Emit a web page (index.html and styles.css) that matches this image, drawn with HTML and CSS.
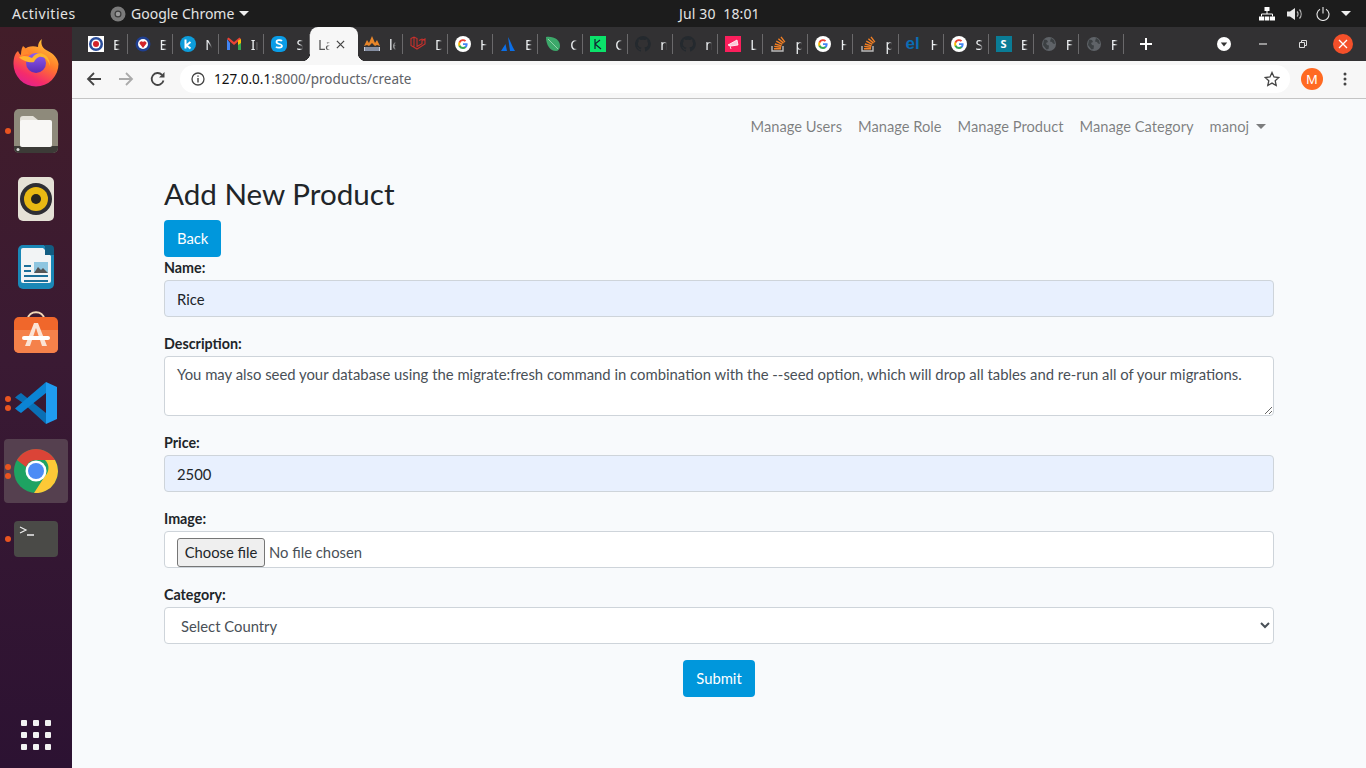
FILE: index.html
```html
<!DOCTYPE html>
<html lang="en">
<head>
<meta charset="utf-8">
<title>Laravel</title>
<link rel="stylesheet" href="styles.css">
</head>
<body>
<svg class="defs" width="0" height="0" aria-hidden="true">
  <symbol id="g" viewBox="0 0 16 16">
    <circle cx="8" cy="8" r="8" fill="#fff"/>
    <path d="M12.600 8.200c0-.4 0-.7-.1-1H8v1.900h2.600a2.300 2.300 0 0 1-1 1.500v1.200h1.600c.9-.9 1.400-2.100 1.400-3.600z" fill="#4285f4"/>
    <path d="M8 13c1.300 0 2.400-.4 3.200-1.200l-1.600-1.200c-.4.300-1 .5-1.600.5-1.300 0-2.300-.8-2.700-2H3.700v1.300A5 5 0 0 0 8 13z" fill="#34a853"/>
    <path d="M5.300 9.100a3 3 0 0 1 0-2V5.700H3.700a5 5 0 0 0 0 4.700z" fill="#fbbc05"/>
    <path d="M8 5.100c.7 0 1.300.2 1.800.7l1.400-1.400A5 5 0 0 0 3.700 5.700l1.600 1.300c.4-1.100 1.400-1.900 2.700-1.900z" fill="#ea4335"/>
  </symbol>
  <symbol id="gh" viewBox="0 0 16 16">
    <path fill="#24292e" d="M8 0a8 8 0 0 0-2.500 15.600c.4.100.5-.2.500-.4v-1.400c-2.200.5-2.700-1-2.700-1-.4-.9-.9-1.200-.9-1.200-.7-.5.100-.5.100-.5.800.1 1.200.8 1.200.8.700 1.200 1.900.9 2.300.7.100-.5.300-.9.500-1.100-1.800-.2-3.600-.9-3.600-4 0-.9.300-1.600.8-2.100-.1-.2-.4-1 .1-2.100 0 0 .7-.2 2.200.8a7.600 7.600 0 0 1 4 0c1.500-1 2.200-.8 2.200-.8.400 1.100.200 1.900.1 2.100.5.600.8 1.300.8 2.100 0 3.100-1.900 3.700-3.700 3.900.3.300.6.800.6 1.500v2.200c0 .2.100.5.600.4A8 8 0 0 0 8 0z"/>
  </symbol>
  <symbol id="so" viewBox="0 0 16 16">
    <path d="M2 10v5h11v-5" fill="none" stroke="#bcbbbb" stroke-width="1.400"/>
    <path d="M4 12.700h7M4.200 10.400l6.900.8M4.900 8l6.700 1.900M6.300 5.100l6 3.200M8.400 2.700l5.100 4.400M11 .8l3.900 5.300" fill="none" stroke="#f48024" stroke-width="1.400"/>
  </symbol>
  <symbol id="globe" viewBox="0 0 16 16">
    <circle cx="8" cy="8" r="7" fill="#5f6368"/>
    <path d="M3 3.500l3 .5 1 2-2 1 1 2 2 .5-.5 3.500-2 .5L2 9zM10 2l3 2 1 4-2-.5-1-1.500-2-.5z" fill="#3c4043"/>
  </symbol>
</svg>

<header class="topbar">
  <span class="activities">Activities</span>
  <span class="app">
    <svg class="app-icon" viewBox="0 0 16 16"><circle cx="8" cy="8" r="7.500" fill="#7b7b7b"/><circle cx="8" cy="8" r="3.500" fill="#3a3a3a"/><circle cx="8" cy="8" r="2.300" fill="#9b9b9b"/></svg>
    Google Chrome
    <i class="caret-w"></i>
  </span>
  <span class="clock">Jul 30&nbsp; 18:01</span>
  <span class="tray">
    <svg class="tray-net" viewBox="0 0 16 14"><path fill="#fff" d="M5.500 0h5v4h-5zM0 9.500h5v4H0zM5.700 9.500h4.600v4H5.700zM11 9.500h5v4h-5z"/><path d="M8 4v3M2.500 9.500V7h11v2.500" fill="none" stroke="#fff"/></svg>
    <svg class="tray-vol" viewBox="0 0 16 14"><path fill="#e8e8e8" d="M0 4.500h3L8 1v12L3 9.500H0z"/><path d="M10 4.500a3.500 3.500 0 0 1 0 5M12.500 2.500a7 7 0 0 1 0 9" fill="none" stroke="#bbb" stroke-width="1.200"/></svg>
    <svg class="tray-pow" viewBox="0 0 14 14"><path d="M4 2.300a6 6 0 1 0 6 0M7 0v6.500" fill="none" stroke="#e8e8e8" stroke-width="1.100"/></svg>
    <i class="caret-w"></i>
  </span>
</header>

<div class="desktop">
  <nav class="dock">
    <div class="dock-item">
      <svg class="ic-firefox" viewBox="0 0 46 48">
        <defs>
          <linearGradient id="ff1" x1="0.800" y1="0" x2="0.300" y2="1"><stop offset="0" stop-color="#ffd23a"/><stop offset=".45" stop-color="#ff7a2a"/><stop offset=".8" stop-color="#f52c6a"/><stop offset="1" stop-color="#e0218f"/></linearGradient>
          <linearGradient id="ff2" x1="0.500" y1="0" x2="0.500" y2="1"><stop offset="0" stop-color="#8f5df0"/><stop offset="1" stop-color="#5b2bb5"/></linearGradient>
        </defs>
        <path fill="url(#ff1)" d="M29 0C27 5 30 10 35 12C41 15 45 20 45.500 25A22.500 22.500 0 0 1 .5 25C.5 19 2 14 5 12C6 14 6.500 15 8 16C9 12 11 10 15 8C18 7 22 7 25 8C25 5 26 2 29 0z"/>
        <circle cx="23" cy="24" r="10" fill="url(#ff2)"/>
        <path fill="#ffb52e" d="M6 18C11 16 15 17 19 19C22 14 28 13 32 16C35 18 37 22 37 27C35 20 30 17 26 18C23 19 22 21 21 23C17 24 9 22 6 18z"/>
        <path fill="#ff8a2c" d="M10 7C13 9 15 12 16 15C13 15 10 16 8 18C8 14 8 10 10 7z"/>
      </svg>
    </div>
    <div class="dock-item">
      <i class="dot dot-one"></i>
      <svg class="ic-files" viewBox="0 0 44 44">
        <rect width="44" height="44" rx="5" fill="#8e8a7b"/>
        <path d="M0 37h44v2a5 5 0 0 1-5 5H5a5 5 0 0 1-5-5z" fill="#3c3b37"/>
        <path d="M6 10a3 3 0 0 1 3-3h10l5 4h10a3 3 0 0 1 3 3v19a2 2 0 0 1-2 2H8a2 2 0 0 1-2-2z" fill="#e4e1d9"/>
        <rect x="6" y="11" width="32" height="27" rx="2" fill="#f8f7f5"/>
        <circle cx="4" cy="40.500" r="1.500" fill="#ddd"/>
      </svg>
    </div>
    <div class="dock-item">
      <svg class="ic-rhythm" viewBox="0 0 36 44">
        <rect width="36" height="44" rx="5" fill="#e5e1d6"/>
        <circle cx="18" cy="22" r="16" fill="#2e2e33"/>
        <circle cx="18" cy="22" r="12" fill="#e9b913"/>
        <circle cx="18" cy="22" r="5" fill="#26241f"/>
      </svg>
    </div>
    <div class="dock-item">
      <svg class="ic-writer" viewBox="0 0 36 44">
        <path d="M6 0h20l10 10v29a5 5 0 0 1-5 5H5a5 5 0 0 1-5-5V5a5 5 0 0 1 5-5z" fill="#1a87b6"/>
        <path d="M5 3h20l8 8v25a2 2 0 0 1-2 2H5a2 2 0 0 1-2-2V5a2 2 0 0 1 2-2z" fill="#f2f4f5"/>
        <path d="M27 0h5a4 4 0 0 1 4 4v6h-9z" fill="#135d82"/>
        <path d="M6 20h7v2H6zM6 25h7v2H6zM6 30h24v2H6zM6 35h24v2H6z" fill="#1b6f99"/>
        <rect x="16" y="17" width="14" height="11" fill="#8fc6e0"/>
        <path d="M16 28l4-6 3 3 2-2 5 5z" fill="#555"/>
      </svg>
    </div>
    <div class="dock-item">
      <svg class="ic-store" viewBox="0 0 44 48">
        <path d="M14 8C14-1 30-1 30 8" fill="none" stroke="#f3d9b8" stroke-width="2"/>
        <rect y="6" width="44" height="36" rx="5" fill="#f0672b"/>
        <path d="M0 19h44v18a5 5 0 0 1-5 5H5a5 5 0 0 1-5-5z" fill="#f5814a"/>
        <path d="M20 12h4l9 23h-5L22 17l-6 18h-5z" fill="#fbe3d4"/>
        <rect x="8" y="25" width="28" height="4" rx="2" fill="#fff"/>
      </svg>
    </div>
    <div class="dock-item">
      <i class="dot dot-a"></i><i class="dot dot-b"></i>
      <svg class="ic-code" viewBox="0 0 42 42">
        <path d="M31 42V31L6 11 3 13 0 15.500 8 21z" fill="#0a6fb5"/>
        <path d="M31 0V11L6 31 3 29 0 26.500 31 0z" fill="#0b84d4"/>
        <path d="M31 0L42 5V37L31 42z" fill="#1f9cf0"/>
      </svg>
    </div>
    <div class="dock-item dock-active">
      <i class="dot dot-a"></i><i class="dot dot-b"></i>
      <svg class="ic-chrome" viewBox="0 0 44 44">
        <circle cx="22" cy="22" r="22" fill="#1ea362"/>
        <path d="M3 11A22 22 0 0 1 41 11H22a11 11 0 0 0-10 7z" fill="#db4437"/>
        <path d="M41 11A22 22 0 0 1 20 44l11-17a11 11 0 0 0 0-16z" fill="#fdc937"/>
        <circle cx="22" cy="22" r="10.500" fill="#fff"/>
        <circle cx="22" cy="22" r="8" fill="#4c8bf5"/>
      </svg>
    </div>
    <div class="dock-item">
      <i class="dot dot-one"></i>
      <svg class="ic-term" viewBox="0 0 44 36">
        <rect width="44" height="36" rx="4" fill="#4a4a47"/>
        <path d="M6 6l6 3-6 3" fill="none" stroke="#eee" stroke-width="1.200"/>
        <path d="M13 14h7" stroke="#eee" stroke-width="1.500"/>
      </svg>
    </div>
    <div class="apps-grid" aria-hidden="true">
      <i></i><i></i><i></i><i></i><i></i><i></i><i></i><i></i><i></i>
    </div>
  </nav>

  <div class="window">
    <div class="tabstrip">
      <div class="tab wide first"><svg class="fav" viewBox="0 0 16 16"><rect width="16" height="16" fill="#fff"/><circle cx="8" cy="8" r="7" fill="#2a4d9b"/><circle cx="8" cy="8" r="4.500" fill="#fff"/><circle cx="8" cy="8" r="3" fill="#d2232a"/></svg><span class="tab-t">E</span></div>
      <div class="tab wide"><svg class="fav" viewBox="0 0 16 16"><circle cx="8" cy="8" r="7.500" fill="#1f3f8f"/><circle cx="8" cy="8" r="5" fill="#fff"/><path d="M8 12L4.500 7.500a2 2 0 0 1 3.500-1.500 2 2 0 0 1 3.500 1.500z" fill="#d2232a"/></svg><span class="tab-t">E</span></div>
      <div class="tab wide"><svg class="fav" viewBox="0 0 16 16"><circle cx="8" cy="8" r="8" fill="#0d9ddb"/><path d="M5.500 3.500v9M10.500 6l-4 3.300 4 3.200" fill="none" stroke="#fff" stroke-width="2"/></svg><span class="tab-t">N</span></div>
      <div class="tab wide"><svg class="fav" viewBox="0 0 16 16"><path d="M1 3v11h3V7z" fill="#4285f4"/><path d="M15 3v11h-3V7z" fill="#34a853"/><path d="M1 3l7 6 7-6-1.500-1.500L8 6 2.500 1.500z" fill="#ea4335"/><path d="M12 4.500L15 3v4l-3 2z" fill="#fbbc05"/></svg><span class="tab-t">In</span></div>
      <div class="tab wide"><svg class="fav" viewBox="0 0 16 16"><rect width="16" height="16" rx="6" fill="#0a9ce6"/><path d="M11 5c-1-1.200-5.500-1.500-5.500 1 0 2.500 5.500 1.500 5.500 4 0 2.300-5 2-6 .7" fill="none" stroke="#fff" stroke-width="1.700"/></svg><span class="tab-t">S</span></div>
      <div class="tab tab-active"><span class="tab-t">La</span><svg class="tab-x" viewBox="0 0 10 10"><path d="M1 1l8 8M9 1l-8 8" stroke="#444" stroke-width="1.400"/></svg></div>
      <div class="tab after-active"><svg class="fav" viewBox="0 0 16 16"><path d="M0 10L3 4l2 3 3-7 3 7 2-3 3 6-3-1-2 1-3-3-3 3-2-1z" fill="#e8862a"/><rect y="11" width="16" height="4" fill="#c5cbd8"/><path d="M1 12h14M1 14h14" stroke="#44506b"/></svg><span class="tab-t">le</span></div>
      <div class="tab"><svg class="fav" viewBox="0 0 16 16"><path d="M1 2.500l3-1.500 3 1.500v8l5-2.800V4.500l3-1.500v5l-8 5-6-3.500zM9 4.500l3-1.500 3 1.500M4 1v9.500" fill="none" stroke="#c9302c" stroke-width="1.100"/></svg><span class="tab-t">D</span></div>
      <div class="tab"><svg class="fav"><use href="#g"/></svg><span class="tab-t">H</span></div>
      <div class="tab"><svg class="fav" viewBox="0 0 16 16"><path d="M8 1c2 3 4 9 7 14h-5zM5.500 8L1 15h6z" fill="#0b6fe8"/></svg><span class="tab-t">E</span></div>
      <div class="tab"><svg class="fav" viewBox="0 0 16 16"><path d="M1 1c8-1 14 3 14 9 0 3-2 5-4 5-6 0-10-6-10-14z" fill="#3ca86a"/><path d="M3 3l10 10" stroke="#a7dcb9" stroke-width=".8"/></svg><span class="tab-t">C</span></div>
      <div class="tab"><svg class="fav" viewBox="0 0 16 16"><rect width="16" height="16" fill="#0be26a"/><path d="M5 3v10M5 8l5-4M5 8l6 5" stroke="#123" stroke-width="1.200" fill="none"/></svg><span class="tab-t">C</span></div>
      <div class="tab"><svg class="fav"><use href="#gh"/></svg><span class="tab-t">n</span></div>
      <div class="tab"><svg class="fav"><use href="#gh"/></svg><span class="tab-t">n</span></div>
      <div class="tab"><svg class="fav" viewBox="0 0 16 16"><rect width="16" height="16" fill="#fb1f5c"/><path d="M3 9l9-5 1 5-7 1zM5 10l1 3" fill="#fbc7d5" stroke="#fff" stroke-width=".8"/></svg><span class="tab-t">L</span></div>
      <div class="tab"><svg class="fav"><use href="#so"/></svg><span class="tab-t">p</span></div>
      <div class="tab"><svg class="fav"><use href="#g"/></svg><span class="tab-t">H</span></div>
      <div class="tab"><svg class="fav"><use href="#so"/></svg><span class="tab-t">p</span></div>
      <div class="tab"><span class="fav fav-el">el</span><span class="tab-t">H</span></div>
      <div class="tab"><svg class="fav"><use href="#g"/></svg><span class="tab-t">S</span></div>
      <div class="tab"><span class="fav fav-s">S</span><span class="tab-t">E</span></div>
      <div class="tab"><svg class="fav"><use href="#globe"/></svg><span class="tab-t">F</span></div>
      <div class="tab"><svg class="fav"><use href="#globe"/></svg><span class="tab-t">F</span></div>
      <svg class="newtab" viewBox="0 0 12 12"><path d="M6 0v12M0 6h12" stroke="#fff" stroke-width="2"/></svg>
      <svg class="tabsearch" viewBox="0 0 14 14"><circle cx="7" cy="7" r="7" fill="#fff"/><path d="M3.800 5.500h6.400L7 9.500z" fill="#333"/></svg>
      <svg class="win-min" viewBox="0 0 8 2"><path d="M0 1h8" stroke="#ddd" stroke-width="1.200"/></svg>
      <svg class="win-max" viewBox="0 0 8 8"><path d="M.5 2.500h5v5h-5zM2.500 2V.5h5v5H6" fill="none" stroke="#ddd"/></svg>
      <svg class="win-close" viewBox="0 0 20 20"><circle cx="10" cy="10" r="10" fill="#f4502a"/><path d="M6 6l8 8M14 6l-8 8" stroke="#fff" stroke-width="1.300"/></svg>
    </div>

    <div class="toolbar">
      <svg class="tb-btn" viewBox="0 0 16 16"><path d="M15 8H2M8 2L2 8l6 6" fill="none" stroke="#444" stroke-width="1.800"/></svg>
      <svg class="tb-btn" viewBox="0 0 16 16"><path d="M1 8h13M8 2l6 6-6 6" fill="none" stroke="#aaa" stroke-width="1.800"/></svg>
      <svg class="tb-btn" viewBox="0 0 16 16"><path d="M13.500 9.500A6 6 0 1 1 12 3.800" fill="none" stroke="#444" stroke-width="1.800"/><path d="M14.500 1v5.500H9z" fill="#444"/></svg>
      <div class="omnibox">
        <svg class="info" viewBox="0 0 14 14"><circle cx="7" cy="7" r="6" fill="none" stroke="#444" stroke-width="1.300"/><path d="M7 6v4.500M7 3.500v1.300" stroke="#444" stroke-width="1.400"/></svg>
        <span class="url"><b>127.0.0.1</b>:8000/products/create</span>
        <svg class="star" viewBox="0 0 16 16"><path d="M8 1.500l2 4.500 4.800.5-3.600 3.200 1 4.800L8 12.100l-4.200 2.400 1-4.800L1.200 6.500 6 6z" fill="none" stroke="#444" stroke-width="1.300"/></svg>
      </div>
      <span class="avatar">M</span>
      <svg class="kebab" viewBox="0 0 4 14"><circle cx="2" cy="2" r="1.500" fill="#444"/><circle cx="2" cy="7" r="1.500" fill="#444"/><circle cx="2" cy="12" r="1.500" fill="#444"/></svg>
    </div>

    <main class="page">
      <div class="navbar">
        <a class="nav-link">Manage Users</a>
        <a class="nav-link">Manage Role</a>
        <a class="nav-link">Manage Product</a>
        <a class="nav-link">Manage Category</a>
        <a class="nav-link">manoj<i class="caret-nav"></i></a>
      </div>
      <div class="container">
        <h2 class="title">Add New Product</h2>
        <a class="btn">Back</a>
        <form class="form">
          <div class="group">
            <label class="label">Name:</label>
            <input class="control filled" type="text" value="Rice">
          </div>
          <div class="group">
            <label class="label">Description:</label>
            <textarea class="control area">You may also seed your database using the migrate:fresh command in combination with the --seed option, which will drop all tables and re-run all of your migrations.</textarea>
          </div>
          <div class="group">
            <label class="label">Price:</label>
            <input class="control filled" type="text" value="2500">
          </div>
          <div class="group">
            <label class="label">Image:</label>
            <div class="control file-box"><button class="file-btn" type="button">Choose file</button><span class="file-name">No file chosen</span></div>
          </div>
          <div class="group">
            <label class="label">Category:</label>
            <select class="control select"><option>Select Country</option></select>
          </div>
          <div class="actions"><a class="btn">Submit</a></div>
        </form>
      </div>
    </main>
  </div>
</div>
</body>
</html>
```

FILE: styles.css
```css
* { box-sizing: border-box; }
html, body { height: 100%; }
body {
  margin: 0;
  width: 1366px;
  height: 768px;
  overflow: hidden;
  display: flex;
  flex-direction: column;
  font-family: "Open Sans", "Noto Sans", sans-serif;
  background: #1c1c1c;
}
.defs { display: block; height: 0; }

/* GNOME top bar */
.topbar {
  height: 27px;
  flex: none;
  display: flex;
  align-items: center;
  padding-left: 12px;
  background: #1c1c1c;
  color: #e4e4e4;
  font-family: "Noto Sans", sans-serif;
  font-size: 14px;
}
.activities { width: 98px; letter-spacing: .55px; }
.app { display: flex; align-items: center; width: 569px; }
.app-icon { width: 16px; height: 16px; margin-right: 5px; }
.caret-w {
  display: inline-block;
  width: 0;
  height: 0;
  margin-left: 5px;
  border-left: 5px solid transparent;
  border-right: 5px solid transparent;
  border-top: 5px solid #eee;
}
.clock { width: 580px; letter-spacing: .15px; }
.tray { display: flex; align-items: center; }
.tray-net { width: 16px; height: 14px; margin-right: 12px; }
.tray-vol { width: 16px; height: 14px; margin-right: 13px; }
.tray-pow { width: 14px; height: 14px; margin-right: 6px; }

.desktop { flex: 1; display: flex; min-height: 0; }

/* Dock */
.dock {
  width: 72px;
  flex: none;
  display: flex;
  flex-direction: column;
  align-items: center;
  padding-top: 2px;
  background: linear-gradient(180deg, #421d29 0%, #3a1a33 45%, #2c1232 100%);
}
.dock-item {
  position: relative;
  width: 64px;
  height: 68px;
  flex: none;
  display: flex;
  align-items: center;
  justify-content: center;
}
.dock-active { height: 64px; margin: 2px 0; border-radius: 4px; background: #55404f; }
.dot {
  position: absolute;
  left: 1px;
  width: 6px;
  height: 6px;
  border-radius: 50%;
  background: #e95420;
}
.dot-one { top: 31px; }
.dot-a { top: 27px; }
.dot-b { top: 36px; }
.dock-active .dot-a { top: 25px; }
.dock-active .dot-b { top: 34px; }
.ic-firefox { width: 46px; height: 48px; }
.ic-files { width: 44px; height: 44px; }
.ic-rhythm { width: 36px; height: 44px; }
.ic-writer { width: 36px; height: 44px; }
.ic-store { width: 44px; height: 48px; }
.ic-code { width: 42px; height: 42px; }
.ic-chrome { width: 44px; height: 44px; }
.ic-term { width: 44px; height: 36px; }
.apps-grid {
  margin-top: auto;
  margin-bottom: 18px;
  display: grid;
  grid-template-columns: repeat(3, 6px);
  gap: 6px;
}
.apps-grid i { width: 6px; height: 6px; border-radius: 1px; background: #f2f2f2; }

/* Chrome window */
.window { flex: 1; display: flex; flex-direction: column; min-width: 0; }
.tabstrip {
  height: 34px;
  flex: none;
  display: flex;
  align-items: center;
  padding-left: 10px;
  background: #323133;
}
.tab {
  position: relative;
  width: 45.06px;
  height: 34px;
  flex: none;
  display: flex;
  align-items: center;
  padding-left: 7px;
  color: #eceff1;
  font-family: "Noto Sans", sans-serif;
  font-size: 14px;
}
.tab.wide { width: 45.6px; }
.tab.first { padding-left: 6px; }
.tab.after-active { padding-left: 6px; }
.tab::after {
  content: "";
  width: 1px;
  height: 20px;
  margin-left: auto;
  background: #6a696b;
}
.fav { width: 16px; height: 16px; flex: none; }
.fav-el {
  color: #0a6db4;
  font-family: "Liberation Sans", sans-serif;
  font-size: 17px;
  font-weight: 700;
  line-height: 16px;
}
.fav-s {
  background: #0a7c96;
  color: #fff;
  font-size: 11px;
  font-weight: 700;
  line-height: 16px;
  text-align: center;
}
.tab-t {
  width: 14px;
  margin-left: 2px;
  padding-left: 7px;
  overflow: hidden;
  white-space: nowrap;
  -webkit-mask-image: linear-gradient(90deg, #000 75%, transparent);
  mask-image: linear-gradient(90deg, #000 75%, transparent);
}
.tab-active {
  width: 48px;
  border-radius: 8px 8px 0 0;
  background: #f7f7f7;
  color: #555;
  padding-left: 8px;
}
.tab-active::before,
.tab-active::after {
  content: "";
  position: absolute;
  bottom: 0;
  width: 8px;
  height: 8px;
  margin: 0;
}
.tab-active::before {
  left: -8px;
  background: radial-gradient(circle at 0 0, transparent 8px, #f7f7f7 8.5px);
}
.tab-active::after {
  right: -8px;
  background: radial-gradient(circle at 100% 0, transparent 8px, #f7f7f7 8.5px);
}
.tab-active .tab-t { margin-left: 0; padding-left: 0; width: 12px; }
.tab-x { width: 9px; height: 9px; margin-left: 6px; }
.newtab { width: 12px; height: 12px; margin-left: 16px; }
.tabsearch { width: 14px; height: 14px; margin-left: 65px; }
.win-min { width: 8px; height: 2px; margin-left: 28px; }
.win-max { width: 8px; height: 8px; margin-left: 32px; }
.win-close { width: 20px; height: 20px; margin-left: 26px; }

.toolbar {
  height: 38px;
  flex: none;
  display: flex;
  align-items: flex-start;
  padding: 4px 0 0 14px;
  background: #f7f7f7;
  border-bottom: 1px solid #c4c4c4;
}
.tb-btn { width: 16px; height: 16px; margin: 6px 16px 0 0; flex: none; }
.omnibox {
  width: 1110px;
  height: 28px;
  margin-left: -2px;
  display: flex;
  align-items: center;
  padding-left: 11px;
  border-radius: 14px;
  background: #fff;
}
.info { width: 14px; height: 14px; flex: none; }
.url {
  margin-left: 9px;
  color: #5f6368;
  font-family: "Noto Sans", sans-serif;
  font-size: 13.5px;
}
.url b { color: #111; font-weight: 400; }
.star { width: 16px; height: 16px; margin-left: auto; margin-right: 10px; }
.avatar {
  width: 22px;
  height: 22px;
  margin: 3px 0 0 11px;
  flex: none;
  border-radius: 50%;
  background: #ff6a22;
  color: #fff;
  font-family: "Noto Sans", sans-serif;
  font-size: 13px;
  line-height: 22px;
  text-align: center;
}
.kebab { width: 4px; height: 14px; margin: 7px 0 0 20px; flex: none; }

/* Page */
.page {
  flex: 1;
  min-height: 0;
  background: #f8fafc;
  color: #212529;
  font-family: "Lato", sans-serif;
  font-size: 14.8px;
}
.navbar {
  display: flex;
  justify-content: flex-end;
  width: 1202px;
  height: 56px;
  padding-top: 16px;
  font-size: 14.7px;
}
.nav-link {
  padding: 0 8px;
  color: rgba(0, 0, 0, .5);
  line-height: 22px;
  white-space: nowrap;
}
.caret-nav {
  display: inline-block;
  margin-left: 7px;
  vertical-align: 3px;
  border-left: 5px solid transparent;
  border-right: 5px solid transparent;
  border-top: 5px solid rgba(0, 0, 0, .5);
}
.container { width: 1110px; margin-left: 92px; }
.title {
  margin: 0;
  height: 65px;
  padding-top: 19px;
  font-size: 29.6px;
  font-weight: 400;
  line-height: 40px;
  color: #212529;
}
.btn {
  display: inline-block;
  height: 37px;
  padding: 0 13px;
  border-radius: 4px;
  background: #0097dc;
  color: #fff;
  line-height: 37px;
}
.form { display: block; }
.group { margin-bottom: 16px; }
.label { display: block; height: 23px; font-weight: 700; font-size: 14.3px; line-height: 22px; }
.control {
  display: block;
  width: 100%;
  height: 37px;
  padding: 0 12px;
  border: 1px solid #ced4da;
  border-radius: 4px;
  background: #fff;
  color: #495057;
  font-family: "Lato", sans-serif;
  font-size: 14.8px;
  outline: none;
}
.filled { background: #e8f0fe; color: #212529; }
.area { height: 60px; padding-top: 6px; font-size: 14.85px; line-height: 23px; resize: vertical; }
.file-box { display: flex; align-items: flex-start; padding-top: 6px; }
.file-btn {
  width: 88px;
  height: 29px;
  padding: 0 0 1px;
  border: 1px solid #767676;
  border-radius: 3px;
  background: #efefef;
  color: #212529;
  font: inherit;
}
.file-name { margin-left: 4px; line-height: 28px; }
.select { padding-left: 12px; }
.actions { display: flex; justify-content: center; }
```
